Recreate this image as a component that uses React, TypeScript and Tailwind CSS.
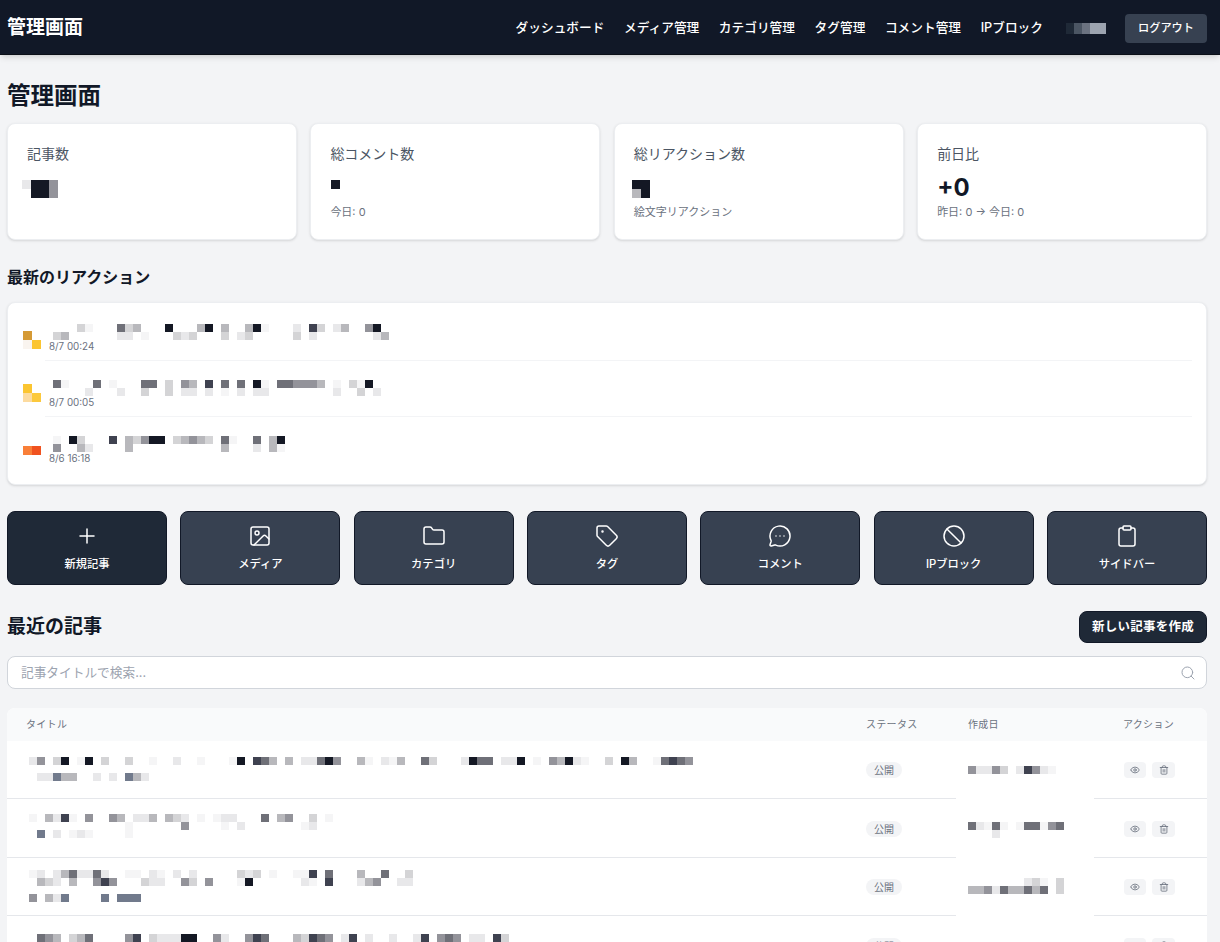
import { Plus, Image, Folder, Tag, MessageCircleMore, Ban, Clipboard, Search, Eye, Trash2 } from 'lucide-react';

const shades: Record<string, string> = {
  '0': 'bg-transparent',
  '1': 'bg-[#f5f5f6]',
  '2': 'bg-[#e8e8ea]',
  '3': 'bg-[#d4d4d6]',
  '4': 'bg-[#b8b8bc]',
  '5': 'bg-[#93939a]',
  '6': 'bg-[#6f7078]',
  '7': 'bg-[#3f4250]',
  '8': 'bg-[#141824]',
  '9': 'bg-[#717a8c]',
};

// redacted text: each line is "column:shade" pairs, 8px cells
function Mosaic({ lines, big = false }: { lines: string[]; big?: boolean }) {
  return (
    <div className="flex flex-col">
      {lines.map((line, i) => {
        const cells: string[] = [];
        line
          .split(' ')
          .filter(Boolean)
          .forEach((pair) => {
            const [col, shade] = pair.split(':');
            cells[Number(col)] = shade;
          });
        return (
          <div key={i} className={big ? 'flex h-[9px]' : 'flex h-2'}>
            {Array.from(cells, (shade, j) => (
              <span key={j} className={`${big ? 'w-[9px]' : 'w-2'} h-full ${shades[shade ?? '0']}`} />
            ))}
          </div>
        );
      })}
    </div>
  );
}

const stats = [
  { label: '記事数', value: ['0:2 1:8 2:8 3:5', '1:8 2:8 3:5'], offset: '-ml-[5px]', sub: '' },
  { label: '総コメント数', value: ['0:8'], offset: 'ml-px', sub: '今日: 0' },
  { label: '総リアクション数', value: ['0:8 1:8', '0:4 1:8'], offset: '-ml-[2px]', sub: '絵文字リアクション' },
  { label: '前日比', value: null, offset: '', sub: '昨日: 0 → 今日: 0' },
];

const reactions = [
  {
    emoji: ['bg-[#d59a35]', '', 'bg-[#f9f4ef]', 'bg-[#fbc531]'],
    emojiTop: 'mt-[26px]',
    text: [
      '3:3 4:1 8:6 9:3 10:4 14:8 18:4 19:8 21:4 24:4 25:8 26:1 30:2 32:7 33:3 35:2 36:4 39:5 40:8',
      '0:3 1:4 8:2 9:2 11:1 15:3 16:2 17:3 21:3 23:2 24:3 30:3 32:2 40:2 41:4',
    ],
    date: '8/7 00:24',
    line: true,
  },
  {
    emoji: ['bg-[#fbc531]', '', 'bg-[#fcdba0]', 'bg-[#fcc93d]'],
    emojiTop: 'mt-[23px]',
    text: [
      '0:6 1:1 5:6 7:1 11:6 12:6 14:3 16:5 17:4 19:7 21:6 23:6 25:8 26:1 28:6 29:6 30:5 31:5 32:5 33:4 35:1 37:3 38:1 39:8',
      '4:2 8:2 11:3 14:3 16:2 17:2 19:2 21:1 23:2 25:2 26:2 35:2 38:3 40:2',
    ],
    date: '8/7 00:05',
    line: true,
  },
  {
    emoji: ['bg-[#f97f38]', 'bg-[#f0521f]'],
    emojiTop: 'mt-[29px]',
    text: [
      '0:1 2:8 3:3 7:7 9:4 10:3 11:5 12:8 13:8 15:3 16:4 17:5 18:4 19:3 21:6 22:1 25:6 27:4 28:8',
      '0:5 3:4 4:2 9:4 21:4 25:2 27:4 28:1',
    ],
    date: '8/6 16:18',
    line: false,
  },
];

const actions = [
  { label: '新規記事', Icon: Plus, primary: true },
  { label: 'メディア', Icon: Image, primary: false },
  { label: 'カテゴリ', Icon: Folder, primary: false },
  { label: 'タグ', Icon: Tag, primary: false },
  { label: 'コメント', Icon: MessageCircleMore, primary: false },
  { label: 'IPブロック', Icon: Ban, primary: false },
  { label: 'サイドバー', Icon: Clipboard, primary: false },
];

const articles = [
  {
    titleTop: 'pt-[16px]',
    title: [
      '0:2 1:5 3:3 4:8 6:1 7:8 9:3 12:3 15:1 18:2 21:1 25:1 26:8 28:7 29:6 30:4 32:4 34:2 35:2 36:6 37:8 38:5 41:4 42:1 44:2 45:1 46:4 49:6 50:3 54:2 55:8 56:6 57:6 59:2 60:2 61:8 63:1 65:5 66:4 67:8 68:2 69:1 72:3 74:8 75:4 78:1 79:6 80:7 81:6 82:5',
      '',
      '1:2 2:2 3:9 4:4 5:4 8:2 10:2 12:9 13:4 14:2',
    ],
    dateTop: 'pt-[25.5px]',
    date: ['0:5 1:2 2:2 3:5 4:3 6:2 7:7 8:5 9:2 10:1'],
  },
  {
    titleTop: 'pt-[15px]',
    title: [
      '0:1 2:4 3:2 4:7 5:1 7:5 10:5 11:4 13:2 14:2 15:4 17:4 18:3 19:2 21:1 23:1 24:2 25:2 29:6 31:4 32:5 35:3 37:1',
      '12:1 19:5 24:1 26:2 34:1 35:2',
      '1:9 3:2 5:1 6:2 7:1 12:1',
    ],
    dateTop: 'pt-[23px]',
    date: ['0:6 1:2 2:1 3:6 4:1 6:1 7:6 8:6 9:1 10:5 11:6', '3:2'],
  },
  {
    titleTop: 'pt-[12px]',
    title: [
      '0:1 1:2 3:2 4:4 5:6 6:2 7:2 8:6 9:2 12:1 13:1 15:2 16:1 18:2 20:2 26:3 27:2 28:3 30:1 33:1 34:1 35:7 37:6 41:4 44:6 47:3',
      '1:4 2:3 3:2 5:4 8:5 9:7 10:5 14:3 15:2 16:2 19:5 20:3 22:5 26:1 27:8 34:2 35:1 37:7 41:2 42:4 43:5 46:2 47:2',
      '',
      '0:5 2:4 3:2 4:9 9:9 11:9 12:9 13:9',
    ],
    dateTop: 'pt-[20px]',
    date: ['7:2 8:3 9:1 11:3', '0:4 1:4 2:5 3:2 4:6 5:4 6:4 7:6 8:4 9:6 11:3'],
  },
  {
    titleTop: 'pt-[18px]',
    title: ['1:6 2:5 3:4 5:3 6:4 7:6 12:5 13:7 15:3 16:2 17:2 18:2 19:8 20:8 23:5 24:2 27:5 28:7 29:6 33:4 34:3 35:7 36:6 37:5 39:2 40:7 42:2 45:2 48:2 49:7 51:5 52:6 53:5 55:2 56:2 58:7 59:3'],
    dateTop: 'pt-[20px]',
    date: [],
  },
];

const navItems = ['ダッシュボード', 'メディア管理', 'カテゴリ管理', 'タグ管理', 'コメント管理', 'IPブロック'];

function Header() {
  return (
    <header className="flex h-[55px] items-center justify-between border-b border-[#0b0f17] bg-[#111827] pl-[7px] pr-[13px] pt-[2px] shadow-md">
      <span className="text-[19px] font-bold text-white">管理画面</span>
      <nav className="flex items-center">
        <div className="flex items-center gap-[19.6px]">
          {navItems.map((item) => (
            <a key={item} className="text-[12.7px] font-medium text-white">
              {item}
            </a>
          ))}
        </div>
        <div className="ml-[23px] flex h-[11px]">
          <span className="w-2 bg-[#1f2937]" />
          <span className="w-2 bg-[#4b5563]" />
          <span className="w-2 bg-[#6b7280]" />
          <span className="w-2 bg-[#9ca3af]" />
          <span className="w-2 bg-[#9ca3af]" />
        </div>
        <button className="ml-[19px] h-[29px] w-[82px] rounded bg-[#374151] text-[11.2px] font-medium text-white">
          ログアウト
        </button>
      </nav>
    </header>
  );
}

function StatCard({ stat }: { stat: (typeof stats)[number] }) {
  return (
    <div className="h-[117px] rounded-lg border border-[#eceef1] bg-white px-[19px] pt-[20px] shadow-sm">
      <p className="text-[14px] leading-[20px] text-[#4b5563]">{stat.label}</p>
      <div className="mt-[16px] flex h-[24px] flex-col">
        {stat.value ? (
          <div className={stat.offset}>
            <Mosaic lines={stat.value} big />
          </div>
        ) : (
          <p className="-mt-[7px] text-[24px] font-bold leading-[30px] text-[#111827]">+0</p>
        )}
      </div>
      {stat.sub ? <p className="text-[11px] leading-[16px] text-[#6b7280]">{stat.sub}</p> : null}
    </div>
  );
}

function ReactionRow({ row }: { row: (typeof reactions)[number] }) {
  return (
    <div className="flex h-[56px]">
      <div className={`${row.emojiTop} grid h-fit w-[18px] shrink-0 grid-cols-2`}>
        {row.emoji.map((c, i) => (
          <span key={i} className={`h-[9px] ${c}`} />
        ))}
      </div>
      <div className={`ml-[4px] flex-1 pl-1 pt-[19px] ${row.line ? 'border-b border-[#f3f4f6]' : ''}`}>
        <div className="ml-1">
          <Mosaic lines={row.text} />
        </div>
        <p className="text-[9.8px] leading-[14px] text-[#6b7280]">{row.date}</p>
      </div>
    </div>
  );
}

function ArticleRow({ article }: { article: (typeof articles)[number] }) {
  const cell = 'border-b border-[#e5e7eb]';
  return (
    <div className="flex h-[58.5px]">
      <div className={`w-[840px] pl-[22px] ${article.titleTop} ${cell}`}>
        <Mosaic lines={article.title} />
      </div>
      <div className={`flex w-[109px] items-center pl-[19px] pt-[2px] ${cell}`}>
        <span className="rounded-full bg-[#f3f4f6] px-[8px] py-[1px] text-[10px] leading-[14px] text-[#6b7280]">公開</span>
      </div>
      <div className={`w-[138px] border-b border-white pl-[12px] ${article.dateTop}`}>
        <Mosaic lines={article.date} />
      </div>
      <div className={`flex flex-1 items-center gap-[6px] pl-[30px] pt-[2px] ${cell}`}>
        <span className="flex h-[16px] w-[22px] items-center justify-center rounded bg-[#f3f4f6] text-[#6b7280]">
          <Eye className="h-[10px] w-[10px]" />
        </span>
        <span className="flex h-[16px] w-[23px] items-center justify-center rounded bg-[#f3f4f6] text-[#6b7280]">
          <Trash2 className="h-[10px] w-[10px]" />
        </span>
      </div>
    </div>
  );
}

export default function App() {
  return (
    <div className="h-screen overflow-hidden bg-[#f3f4f6] font-['Inter','Noto_Sans_CJK_JP',sans-serif]">
      <Header />
      <main className="pl-[7px] pr-[13px]">
        <h1 className="mt-[25px] text-[23.5px] font-bold leading-[32px] text-[#111827]">管理画面</h1>

        <div className="mt-[11px] grid grid-cols-4 gap-[13.5px]">
          {stats.map((s) => (
            <StatCard key={s.label} stat={s} />
          ))}
        </div>

        <h2 className="mt-[26px] text-[16px] font-bold leading-[22px] text-[#111827]">最新のリアクション</h2>

        <div className="mt-[14px] h-[183px] rounded-lg border border-[#eceef1] bg-white pl-[15px] pr-[14px] pt-[2px] shadow-sm">
          {reactions.map((r) => (
            <ReactionRow key={r.date} row={r} />
          ))}
        </div>

        <div className="mt-[26px] grid grid-cols-7 gap-[13.33px]">
          {actions.map(({ label, Icon, primary }) => (
            <a
              key={label}
              className={`flex h-[74px] flex-col items-center rounded-lg border border-[#111827] pt-[12px] text-white ${primary ? 'bg-[#1f2937]' : 'bg-[#374151]'}`}
            >
              <Icon className="h-[24px] w-[24px]" strokeWidth={1.5} />
              <span className="mt-[8px] text-[11.3px] font-medium leading-[16px]">{label}</span>
            </a>
          ))}
        </div>

        <div className="mt-[26px] flex items-center justify-between">
          <h2 className="text-[19px] font-bold leading-[26px] text-[#111827]">最近の記事</h2>
          <button className="h-[32px] w-[128px] rounded-lg border border-[#111827] bg-[#1f2937] text-[12.5px] font-bold tracking-[0.02em] text-white">
            新しい記事を作成
          </button>
        </div>

        <div className="mt-[13px] flex h-[33px] items-center justify-between rounded-lg border border-[#d1d5db] bg-white pl-[13px] pr-[10px] pt-px">
          <span className="text-[12.7px] text-[#9ca3af]">記事タイトルで検索...</span>
          <Search className="h-[16px] w-[16px] text-[#9ca3af]" strokeWidth={1.5} />
        </div>

        <div className="mt-[19px] overflow-hidden rounded-t-lg bg-white">
          <div className="flex h-[32.6px] items-center bg-[#f9fafb] text-[10px] tracking-[0.03em] text-[#6b7280]">
            <span className="w-[840px] pl-[19px]">タイトル</span>
            <span className="w-[109px] pl-[19px]">ステータス</span>
            <span className="w-[138px] pl-[12px]">作成日</span>
            <span className="pl-[29px]">アクション</span>
          </div>
          {articles.map((a) => (
            <ArticleRow key={a.titleTop} article={a} />
          ))}
        </div>
      </main>
    </div>
  );
}
